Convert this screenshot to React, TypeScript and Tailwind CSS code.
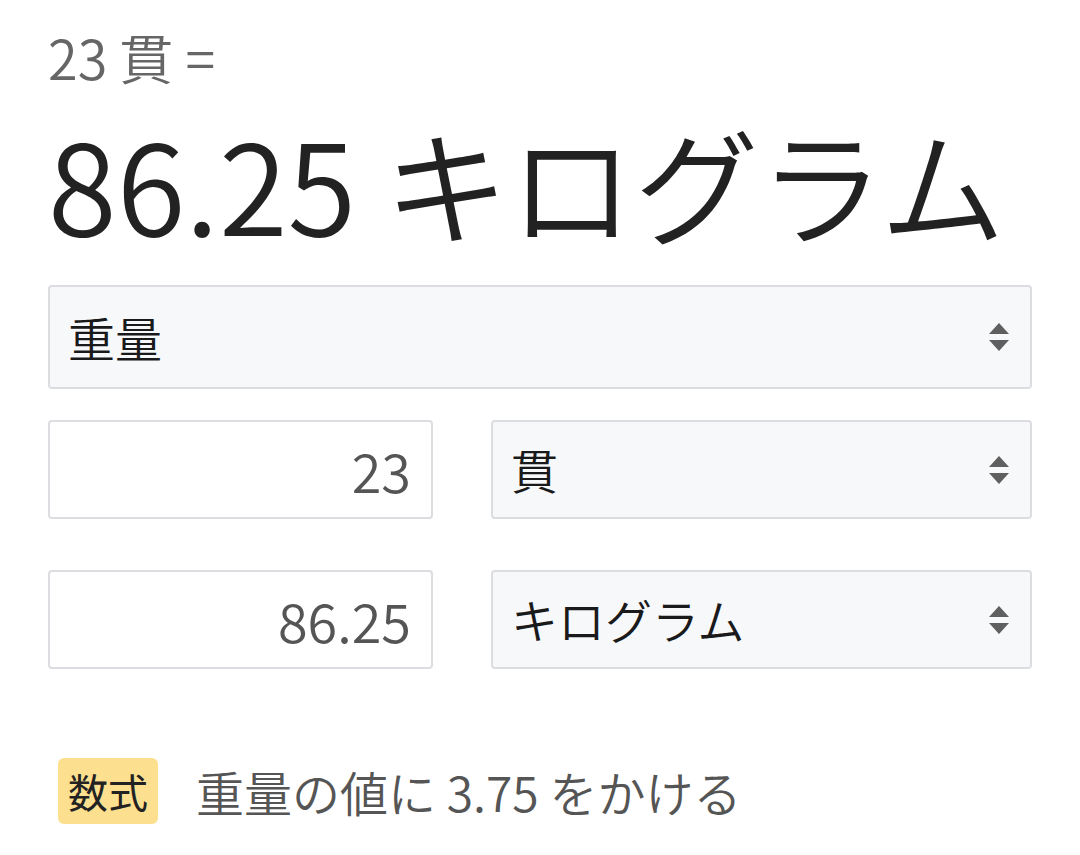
import React from "react";

const font = { fontFamily: "'Noto Sans CJK JP', 'Noto Sans', sans-serif" };

function UpDown() {
  return (
    <svg width="22" height="34" viewBox="0 0 22 34" className="shrink-0">
      <path d="M11 3 L21 14 L1 14 Z" fill="#5f5f5f" />
      <path d="M11 31 L21 20 L1 20 Z" fill="#5f5f5f" />
    </svg>
  );
}

function SelectBox({ label, className }: { label: string; className?: string }) {
  return (
    <div
      className={
        "flex items-center justify-between rounded-[4px] border-2 border-[#dcdde1] bg-[#f7f8fa] pl-[18px] pr-[20px] text-[47px] text-[#1a1a1a] " +
        (className ?? "")
      }
    >
      <span>{label}</span>
      <UpDown />
    </div>
  );
}

function NumberBox({ value }: { value: string }) {
  return (
    <div className="flex h-[99px] w-[385px] items-center justify-end rounded-[4px] border-2 border-[#dcdde1] bg-white pr-[20px] text-[54px] text-[#555]">
      {value}
    </div>
  );
}

export default function App() {
  return (
    <div className="min-h-[855px] w-[1080px] bg-white px-[48px] pt-[22px] font-[350]" style={font}>
      <div className="text-[54px] leading-[70px] text-[#666]">23 貫 =</div>
      <div className="mt-[15px] text-[125px] leading-[150px] text-[#222]">86.25 キログラム</div>

      <SelectBox label="重量" className="mt-[28px] h-[104px] w-[984px]" />

      <div className="mt-[31px] flex gap-[58px]">
        <NumberBox value="23" />
        <SelectBox label="貫" className="h-[99px] w-[541px]" />
      </div>

      <div className="mt-[51px] flex gap-[58px]">
        <NumberBox value="86.25" />
        <SelectBox label="キログラム" className="h-[99px] w-[541px]" />
      </div>

      <div className="mt-[86px] flex items-center gap-[38px] pl-[10px]">
        <span className="rounded-[6px] bg-[#fde08f] px-[10px] py-[6px] text-[40px] leading-[54px] font-normal text-[#222]">
          数式
        </span>
        <span className="text-[48px] text-[#555]">重量の値に 3.75 をかける</span>
      </div>
    </div>
  );
}
